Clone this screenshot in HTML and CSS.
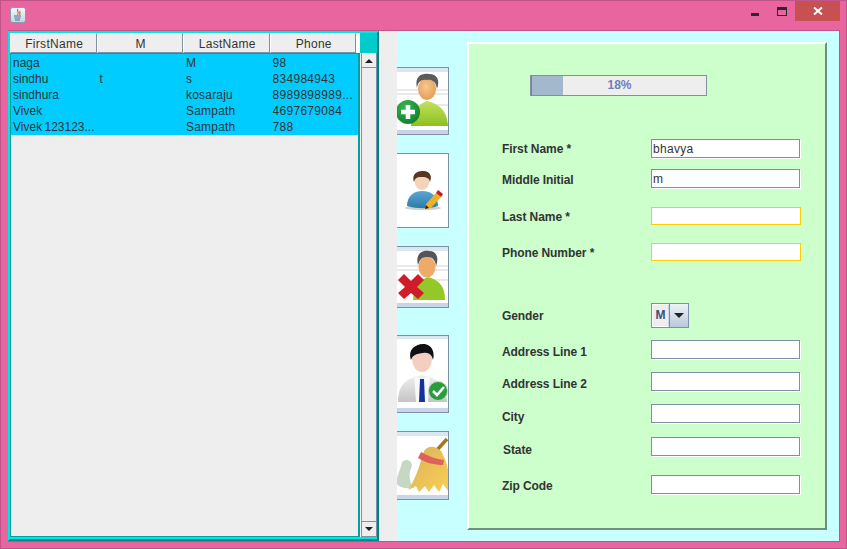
FILE: index.html
```html
<!DOCTYPE html>
<html lang="en">

<head>
    <meta charset="UTF-8" />
    <title>Contacts</title>
    <link rel="stylesheet" href="styles.css">
</head>

<body>
    <div class="window">
        <div class="titlebar">
            <svg class="app-icon" width="16" height="16" viewBox="0 0 16 16">
                <defs>
                    <linearGradient id="appBg" x1="0" y1="0" x2="0" y2="1">
                        <stop offset="0" stop-color="#f6f8fb" />
                        <stop offset="1" stop-color="#c4d2e0" />
                    </linearGradient>
                </defs>
                <rect x="0.5" y="0.5" width="15" height="15" rx="2" fill="url(#appBg)" stroke="#8a9aaa" />
                <path d="M8 2 C6 4 10 5 7.5 8 M10 4 C9 6 11 6 9.5 8" fill="none" stroke="#e0622a" stroke-width="1.2" />
                <path d="M4 9 H11 M4.5 11 H10.5 M5 13 H10" stroke="#4a7096" stroke-width="1" />
            </svg>
            <div class="win-controls">
                <span class="win-min"></span>
                <span class="win-max"></span>
                <span class="win-close">
                    <svg width="10" height="8" viewBox="0 0 10 8">
                        <path d="M1 0.5 L9 7.5 M9 0.5 L1 7.5" stroke="#fff" stroke-width="2" />
                    </svg>
                </span>
            </div>
        </div>

        <div class="content">
            <div class="table-pane">
                <div class="table-head">
                    <div class="head-cell">FirstName</div>
                    <div class="head-cell">M</div>
                    <div class="head-cell">LastName</div>
                    <div class="head-cell">Phone</div>
                </div>
                <div class="table-body">
                    <div class="table-view">
                        <table class="rows">
                            <tr><td>naga</td><td></td><td>M</td><td>98</td></tr>
                            <tr><td>sindhu</td><td>t</td><td>s</td><td>834984943</td></tr>
                            <tr><td>sindhura</td><td></td><td>kosaraju</td><td>8989898989...</td></tr>
                            <tr><td>Vivek</td><td></td><td>Sampath</td><td>4697679084</td></tr>
                            <tr><td>Vivek 123123...</td><td></td><td>Sampath</td><td>788</td></tr>
                        </table>
                    </div>
                    <div class="scrollbar">
                        <div class="scroll-btn"><span class="arrow-up"></span></div>
                        <div class="scroll-track"></div>
                        <div class="scroll-btn"><span class="arrow-down"></span></div>
                    </div>
                </div>
            </div>

            <div class="divider"></div>

            <div class="right-pane">
                <div class="actions">
                    <button class="action add" type="button">
                        <svg width="52" height="66" viewBox="0 0 52 66">
                            <defs>
                                <linearGradient id="shirt" x1="0" y1="0" x2="0" y2="1">
                                    <stop offset="0" stop-color="#c4e060" />
                                    <stop offset="1" stop-color="#8cc020" />
                                </linearGradient>
                                <radialGradient id="skin" cx="0.45" cy="0.4" r="0.7">
                                    <stop offset="0" stop-color="#f8c890" />
                                    <stop offset="1" stop-color="#e09850" />
                                </radialGradient>
                                <radialGradient id="badge" cx="0.4" cy="0.3" r="0.8">
                                    <stop offset="0" stop-color="#38b850" />
                                    <stop offset="1" stop-color="#0c7a2c" />
                                </radialGradient>
                            </defs>
                            <rect width="52" height="66" fill="#fff" />
                            <rect width="52" height="4" fill="#dce6f0" />
                            <rect y="62" width="52" height="4" fill="#c6d6e8" />
                            <path d="M0 22 H52 M0 26 H52 M0 37 H52" stroke="#e2e2e2" stroke-width="1.5" />
                            <path d="M14 58 C15 42 22 36 30 33 C42 36 50 42 51 58 Z" fill="url(#shirt)" />
                            <ellipse cx="30" cy="21" rx="9" ry="11" fill="url(#skin)" />
                            <path d="M20 20 C17 7 26 5 32 6 C41 6 43 13 40 21 C39 13 34 11 30 12 C24 11 21 14 20 20 Z" fill="#5c5c5c" />
                            <circle cx="11" cy="44" r="12" fill="url(#badge)" />
                            <path d="M4 44 H18 M11 37 V51" stroke="#fff" stroke-width="4.5" />
                        </svg>
                    </button>
                    <button class="action edit" type="button">
                        <svg width="52" height="73" viewBox="0 0 52 73">
                            <defs>
                                <linearGradient id="blueTop" x1="0" y1="0" x2="0" y2="1">
                                    <stop offset="0" stop-color="#58a8d4" />
                                    <stop offset="1" stop-color="#2c7aa8" />
                                </linearGradient>
                            </defs>
                            <rect width="52" height="73" fill="#fff" />
                            <ellipse cx="26" cy="54" rx="18" ry="2" fill="#cfcfcf" />
                            <path d="M10 52 C10 41 18 37 25 37 C33 37 41 41 41 52 C32 55 20 55 10 52 Z" fill="url(#blueTop)" />
                            <ellipse cx="25" cy="27" rx="7.5" ry="9" fill="#f4d4b8" />
                            <path d="M17 28 C14 18 23 17 26 17 C34 17 35 23 33 28 C32 23 28 23 24 23 C20 23 18 24 17 28 Z" fill="#5a3420" />
                            <path d="M29 50 L39 39 L44 43 L34 54 L28 55 Z" fill="#f0b020" />
                            <path d="M39 39 L41 36 L46 40 L44 43 Z" fill="#c02020" />
                            <path d="M28 55 L29 51 L32 54 Z" fill="#222" />
                        </svg>
                    </button>
                    <button class="action remove" type="button">
                        <svg width="52" height="60" viewBox="0 0 52 60">
                            <rect width="52" height="60" fill="#fff" />
                            <rect width="52" height="4" fill="#dce6f0" />
                            <rect y="56" width="52" height="4" fill="#c6d6e8" />
                            <path d="M0 19 H52 M0 23 H52 M0 33 H52" stroke="#e2e2e2" stroke-width="1.5" />
                            <path d="M16 53 C17 38 23 33 31 30 C42 33 48 39 48 53 Z" fill="#94c828" />
                            <ellipse cx="30" cy="20" rx="8.5" ry="10.5" fill="#eeaa68" />
                            <path d="M21 18 C18 6 26 3 32 4 C40 4 42 11 39 19 C38 11 34 10 30 10 C25 10 23 12 21 18 Z" fill="#555" />
                            <path d="M1 33 L7 27 L14 34 L21 27 L27 33 L20 40 L27 46 L21 52 L14 46 L7 52 L1 46 L8 40 Z" fill="#d01c28" />
                        </svg>
                    </button>
                    <button class="action confirm" type="button">
                        <svg width="52" height="76" viewBox="0 0 52 76">
                            <defs>
                                <linearGradient id="suit" x1="0" y1="0" x2="0" y2="1">
                                    <stop offset="0" stop-color="#f0f0f0" />
                                    <stop offset="1" stop-color="#c4c4c4" />
                                </linearGradient>
                            </defs>
                            <rect width="52" height="76" fill="#fff" />
                            <rect width="52" height="3" fill="#dce6f0" />
                            <rect y="72" width="52" height="4" fill="#c6d6e8" />
                            <path d="M1 66 C1 48 10 42 25 39 C40 42 49 48 50 66 Z" fill="url(#suit)" />
                            <path d="M17 39 L25 43 L33 39 L31 66 H19 Z" fill="#f8f8f8" />
                            <path d="M23 43 H27 L28 66 H22 Z" fill="#14329a" />
                            <ellipse cx="25" cy="23" rx="10" ry="13" fill="#f4cfc0" />
                            <path d="M14 24 C10 11 22 8 26 8 C36 8 38 18 36 24 C35 19 32 16 26 17 C20 18 16 18 14 24 Z" fill="#101014" />
                            <circle cx="41" cy="55" r="9.5" fill="#2a9c3c" stroke="#c0d8c4" />
                            <path d="M36 55 L40 59 L47 51" fill="none" stroke="#fff" stroke-width="2.6" />
                        </svg>
                    </button>
                    <button class="action clear" type="button">
                        <svg width="52" height="67" viewBox="0 0 52 67">
                            <defs>
                                <linearGradient id="straw" x1="0" y1="0" x2="1" y2="1">
                                    <stop offset="0" stop-color="#dcb060" />
                                    <stop offset="1" stop-color="#f8d050" />
                                </linearGradient>
                            </defs>
                            <rect width="52" height="67" fill="#fff" />
                            <rect width="52" height="4" fill="#dce6f0" />
                            <rect y="63" width="52" height="4" fill="#c6d6e8" />
                            <path d="M0 52 C-1 44 3 40 5 30 C9 26 15 28 15 34 C11 42 12 50 17 56 C10 57 3 56 0 52 Z" fill="#c6d8c4" />
                            <path d="M40 18 L50 7" stroke="#a07820" stroke-width="3.5" />
                            <path d="M27 19 C32 13 38 14 44 19 C48 26 51 34 52 44 L52 60 L46 52 L42 60 L37 53 L32 60 L28 54 L22 60 L19 54 L11 58 C18 48 22 36 27 19 Z" fill="url(#straw)" />
                            <path d="M21 26 C29 31 38 33 46 33 L47 28 C39 27 31 24 24 20 Z" fill="#e0605c" />
                        </svg>
                    </button>
                </div>

                <form class="form-panel">
                    <div class="progress">
                        <div class="progress-fill"></div>
                        <span class="progress-text">18%</span>
                    </div>
                    <div class="fields">
                        <label>First Name *</label>
                        <input class="field" type="text" value="bhavya" />
                        <label class="drop-2">Middle Initial</label>
                        <input class="field" type="text" value="m" />
                        <label>Last Name *</label>
                        <input class="field required" type="text" />
                        <label>Phone Number *</label>
                        <input class="field required" type="text" />
                        <label class="drop-3">Gender</label>
                        <div class="combo">
                            <span class="combo-value">M</span>
                            <span class="combo-btn"><span class="arrow-down"></span></span>
                        </div>
                        <label class="drop-3">Address Line 1</label>
                        <input class="field" type="text" />
                        <label class="drop-3">Address Line 2</label>
                        <input class="field" type="text" />
                        <label class="drop-4">City</label>
                        <input class="field" type="text" />
                        <label class="drop-4 nudge">State</label>
                        <input class="field" type="text" />
                        <label class="drop-2">Zip Code</label>
                        <input class="field" type="text" />
                    </div>
                </form>
            </div>
        </div>
    </div>
</body>

</html>
```

FILE: styles.css
```css
* {
    box-sizing: border-box;
}

html,
body {
    margin: 0;
    padding: 0;
}

body {
    font-family: "Liberation Sans", Arial, sans-serif;
    font-size: 12px;
    color: #333;
    overflow: hidden;
}

.window {
    width: 847px;
    height: 549px;
    background: #e8659f;
    border: 1px solid #c0558a;
    display: flex;
    flex-direction: column;
}

/* title bar */
.titlebar {
    height: 29px;
    flex: none;
    display: flex;
    justify-content: space-between;
    padding-left: 9px;
    padding-top: 6px;
}

.win-controls {
    display: flex;
    margin-top: -6px;
    margin-right: 6px;
}

.win-min {
    width: 8px;
    height: 3px;
    background: #2a2a2a;
    margin-top: 12px;
    margin-right: 18px;
}

.win-max {
    width: 10px;
    height: 9px;
    border: 1px solid #2a2a2a;
    border-top-width: 3px;
    margin-top: 6px;
    margin-right: 8px;
}

.win-close {
    width: 45px;
    height: 20px;
    background: #c75050;
    display: flex;
    align-items: center;
    justify-content: center;
}

.content {
    flex: 1;
    min-height: 0;
    display: flex;
    margin: 0 6px 6px 7px;
    border: 1px solid #c0558a;
    border-left: none;
}

/* table side */
.table-pane {
    width: 371px;
    background: #00cccc;
    border: 2px solid #00e6e6;
    border-right-color: #007f7f;
    border-bottom-color: #007f7f;
    display: flex;
    flex-direction: column;
}

.table-head {
    display: flex;
    height: 20px;
    width: 350px;
    padding-right: 4px;
    flex: none;
    background: #fff;
}

.head-cell {
    flex: 1;
    background: #eee;
    border-left: 1px solid #fff;
    border-top: 1px solid #fff;
    border-right: 1px solid #7f8fa4;
    border-bottom: 1px solid #7f8fa4;
    text-align: center;
    line-height: 19px;
    padding-top: 1px;
    padding-left: 2px;
    letter-spacing: 0.3px;
}

.table-body {
    flex: 1;
    display: flex;
    background: #fff;
    min-height: 0;
    padding-bottom: 2px;
    box-shadow: inset 0 -2px 0 #00e6e6;
}

.table-view {
    width: 350px;
    background: #eee;
    border: 1px solid #00a0a0;
    border-right-width: 2px;
}

.rows {
    width: 347px;
    border-collapse: separate;
    border-spacing: 0;
    border-top: 1px solid #00ccff;
    table-layout: fixed;
    background: #00ccff;
    letter-spacing: 0.2px;
}

.rows td {
    height: 16px;
    padding: 0 0 0 2px;
    line-height: 16px;
    white-space: nowrap;
    overflow: hidden;
}

.rows td:nth-child(-n+3) {
    width: 86.5px;
}

.rows td:first-child {
    letter-spacing: 0;
    word-spacing: -1px;
}

.rows td:last-child {
    letter-spacing: 0.3px;
}

.scrollbar {
    width: 16px;
    margin-left: 1px;
    display: flex;
    flex-direction: column;
    background: #eee;
    border-left: 1px solid #7f8fa4;
    border-right: 1px solid #7f8fa4;
}

.scroll-btn {
    height: 15px;
    background: #eee;
    border-top: 1px solid #fff;
    border-bottom: 1px solid #7f8fa4;
    display: flex;
    align-items: center;
    justify-content: center;
}

.scroll-btn:last-child {
    height: 16px;
    border-top: 1px solid #7f8fa4;
    border-bottom: 1px solid #7f8fa4;
}

.scroll-track {
    flex: 1;
}

.arrow-up,
.arrow-down {
    display: block;
    width: 0;
    height: 0;
    border-left: 4px solid transparent;
    border-right: 4px solid transparent;
}

.arrow-up {
    border-bottom: 4px solid #222;
}

.arrow-down {
    border-top: 4px solid #222;
}

.divider {
    width: 18px;
    background: #eee;
}

/* form side */
.right-pane {
    flex: 1;
    background: #c8ffff;
    display: flex;
    padding-top: 11px;
    padding-bottom: 11px;
}

.actions {
    width: 52px;
    margin-right: 18px;
    padding-top: 25px;
    display: flex;
    flex-direction: column;
    gap: 18px;
}

.action {
    display: block;
    padding: 0;
    border: 1px solid #7f8fa4;
    border-left: none;
    background: #fff;
    line-height: 0;
    overflow: hidden;
    flex: none;
}

.action.confirm {
    margin-top: 9px;
}

.form-panel {
    width: 360px;
    background: #ccffcc;
    border: 2px solid #fff;
    border-right-color: #6f8f7a;
    border-bottom-color: #6f8f7a;
    padding-top: 31px;
    padding-left: 33px;
}

.progress {
    position: relative;
    width: 177px;
    height: 21px;
    margin-left: 28px;
    background: #eee;
    border: 1px solid #7f8fa4;
}

.progress-fill {
    width: 18%;
    height: 100%;
    background: #a3b8cc;
    border-left: 1px solid #6e80b8;
}

.progress-text {
    position: absolute;
    top: 0;
    left: 1px;
    width: 100%;
    text-align: center;
    line-height: 19px;
    font-weight: bold;
    color: #6e80b8;
}

.fields {
    margin-top: 43px;
    display: grid;
    grid-template-columns: 149px 150px;
    grid-template-rows: 30px 38px 36px 61px 36px 32px 32px 33px 38px 19px;
    align-items: start;
}

.fields label {
    font-weight: bold;
    line-height: 19px;
    margin-top: 1px;
    letter-spacing: -0.08px;
}

.fields .drop-2 {
    margin-top: 2px;
}

.fields .drop-3 {
    margin-top: 3px;
}

.fields .drop-4 {
    margin-top: 4px;
}

.fields .nudge {
    margin-left: 1px;
}

.field {
    display: block;
    width: 149px;
    height: 19px;
    padding: 0 1px;
    font-family: "Liberation Sans", Arial, sans-serif;
    font-size: 12px;
    letter-spacing: 0.3px;
    color: #333;
    background: #fff;
    border: 1px solid #7f8fa4;
    box-shadow: 1px 1px 0 #fff;
}

.field.required {
    width: 150px;
    height: 18px;
    border-color: #ffcc00;
    box-shadow: none;
}

.combo {
    display: flex;
    width: 38px;
    height: 25px;
    border: 1px solid #7f8fa4;
    margin-top: -1px;
}

.combo-value {
    width: 17px;
    background: #eee;
    border: 1px solid #fff;
    border-right-color: #c8d4e0;
    font-weight: bold;
    color: #3a5078;
    text-align: center;
    line-height: 20px;
}

.combo-btn {
    flex: 1;
    background: linear-gradient(#eef2f8, #b8c8dc);
    border-left: 1px solid #7f8fa4;
    display: flex;
    align-items: center;
    justify-content: center;
}

.combo-btn .arrow-down {
    border-left-width: 5px;
    border-right-width: 5px;
    border-top-width: 5px;
}
```
